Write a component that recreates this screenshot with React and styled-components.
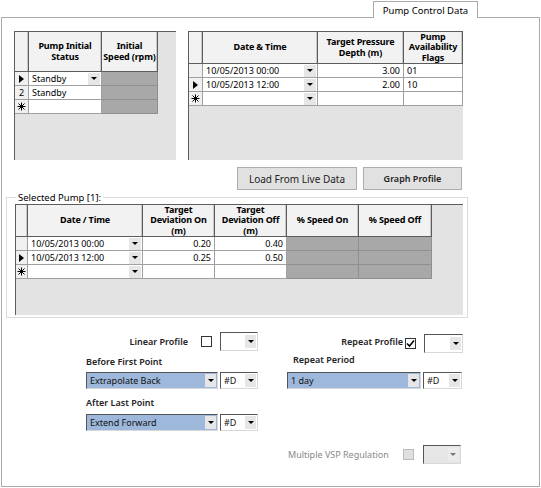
import styled, { createGlobalStyle } from "styled-components";

const GlobalStyle = createGlobalStyle`
  html, body { margin: 0; padding: 0; background: #fff; }
  body {
    font-family: "Noto Sans", "DejaVu Sans", sans-serif;
    font-size: 9px;
    color: #000;
  }
`;

const Window = styled.div`
  width: 541px;
  height: 488px;
  box-sizing: border-box;
  padding: 1px 0 0 1px;
  background: #fff;
`;

const Frame = styled.div`
  width: 539px;
  display: flex;
  flex-direction: column;
`;

const TabStrip = styled.div`
  height: 16px;
  border-bottom: 1px solid #acacac;
  display: flex;
  padding-left: 372px;
`;

const Tab = styled.div`
  width: 105px;
  height: 17px;
  box-sizing: border-box;
  margin-bottom: -1px;
  background: #fff;
  border: 1px solid #acacac;
  border-bottom: none;
  display: flex;
  align-items: center;
  justify-content: center;
  font-size: 9.5px;
  z-index: 1;
`;

const Panel = styled.div`
  height: 469px;
  box-sizing: border-box;
  border: 1px solid #acacac;
  border-top: none;
  display: flex;
  flex-direction: column;
`;

const TopRow = styled.div`
  display: flex;
  gap: 12px;
  margin: 13px 0 0 12px;
`;

const ButtonRow = styled.div`
  display: flex;
  gap: 6px;
  margin: 7px 0 0 235px;
`;

const Button = styled.div`
  width: ${(p) => p.$w}px;
  height: 23px;
  box-sizing: border-box;
  background: #e1e1e1;
  border: 1px solid #adadad;
  display: flex;
  align-items: center;
  justify-content: center;
  font-size: ${(p) => (p.$bold ? 9 : 10)}px;
  font-weight: ${(p) => (p.$bold ? 600 : 400)};
  color: #222;
`;

const GroupBox = styled.fieldset`
  margin: 1px 0 0 4px;
  width: 462px;
  box-sizing: border-box;
  border: 1px solid #dcdcdc;
  padding: 0 0 2px 8px;
`;

const Legend = styled.legend`
  padding: 0 2px;
  margin-left: 1px;
  font-size: 9.5px;
  line-height: 13px;
`;

/* ---- data grid ---- */

const GridFrame = styled.div`
  width: ${(p) => p.$w}px;
  height: ${(p) => p.$h}px;
  box-sizing: border-box;
  background: #e3e3e3;
  border-left: 1px solid #5d5d5d;
  border-top: 1px solid #5d5d5d;
  overflow: hidden;
`;

const GridTable = styled.div`
  display: grid;
  grid-template-columns: ${(p) => p.$cols};
  grid-template-rows: ${(p) => p.$head}px;
  grid-auto-rows: 14px;
  width: max-content;
`;

const HeadCell = styled.div`
  background: #f2f2f2;
  border-right: 1px solid #5d5d5d;
  border-bottom: 1px solid #5d5d5d;
  box-shadow: inset -1px 0 0 #c8c8c8;
  box-sizing: border-box;
  display: flex;
  align-items: center;
  justify-content: center;
  text-align: center;
  font-weight: 700;
  letter-spacing: -0.15px;
  line-height: 10.5px;
  padding: 0 1px;
`;

const Cell = styled.div`
  background: ${(p) => (p.$off ? "#a8a8a8" : "#fff")};
  border-right: 1px solid ${(p) => (p.$off ? "#8f8f8f" : "#a0a0a0")};
  border-bottom: 1px solid ${(p) => (p.$off ? "#8f8f8f" : "#a0a0a0")};
  box-sizing: border-box;
  display: flex;
  align-items: center;
  justify-content: ${(p) => (p.$right ? "flex-end" : "flex-start")};
  padding: 0 ${(p) => (p.$drop ? 1 : 3)}px 0 3px;
  white-space: nowrap;
  overflow: hidden;
`;

const RowHead = styled.div`
  background: #f0f0f0;
  border-right: 1px solid #a0a0a0;
  border-bottom: 1px solid #a0a0a0;
  box-sizing: border-box;
  display: flex;
  align-items: center;
  justify-content: center;
`;

const CellText = styled.span`
  flex: 1;
  text-align: ${(p) => (p.$right ? "right" : "left")};
`;

const Arrow = styled.span`
  width: 0;
  height: 0;
  border-left: 5px solid #000;
  border-top: 4px solid transparent;
  border-bottom: 4px solid transparent;
`;

const DropBtn = styled.span`
  width: ${(p) => p.$w || 12}px;
  height: ${(p) => p.$h || 12}px;
  flex: none;
  background: ${(p) => (p.$off ? "#ececec" : "#e6e6e6")};
  display: flex;
  align-items: center;
  justify-content: center;
  margin-left: auto;
  &::after {
    content: "";
    border-top: 3px solid ${(p) => (p.$off ? "#777" : "#000")};
    border-left: 3px solid transparent;
    border-right: 3px solid transparent;
  }
`;

const NewRow = () => (
  <svg width="9" height="9" viewBox="0 0 9 9">
    <g stroke="#000" strokeWidth="1">
      <line x1="4.5" y1="0.5" x2="4.5" y2="8.5" />
      <line x1="0.5" y1="4.5" x2="8.5" y2="4.5" />
      <line x1="1.5" y1="1.5" x2="7.5" y2="7.5" />
      <line x1="7.5" y1="1.5" x2="1.5" y2="7.5" />
    </g>
  </svg>
);

function marker(m) {
  if (m === "cur") return <Arrow />;
  if (m === "new") return <NewRow />;
  return m;
}

function DataGrid({ w, h, head, cols, headers, rows }) {
  return (
    <GridFrame $w={w} $h={h}>
      <GridTable $cols={cols.map((c) => c + "px").join(" ")} $head={head}>
        <HeadCell />
        {headers.map((t, i) => (
          <HeadCell key={i}>{t}</HeadCell>
        ))}
        {rows.map((r, ri) => [
          <RowHead key={"h" + ri}>{marker(r.mark)}</RowHead>,
          ...r.cells.map((c, ci) => (
            <Cell key={ri + "-" + ci} $off={c.off} $right={c.right} $drop={c.drop}>
              <CellText $right={c.right}>{c.t}</CellText>
              {c.drop && <DropBtn />}
            </Cell>
          )),
        ])}
      </GridTable>
    </GridFrame>
  );
}

/* ---- option controls ---- */

const Options = styled.div`
  display: flex;
  margin: 14px 0 0 84px;
  gap: 29px;
`;

const Column = styled.div`
  width: ${(p) => p.$w}px;
  display: flex;
  flex-direction: column;
`;

const Line = styled.div`
  display: flex;
  align-items: center;
  justify-content: ${(p) => (p.$end ? "flex-end" : "flex-start")};
  height: ${(p) => p.$h || 17}px;
  margin-top: ${(p) => p.$mt || 0}px;
  gap: ${(p) => p.$gap || 0}px;
`;

const Label = styled.span`
  color: ${(p) => (p.$off ? "#8a8a8a" : "#222")};
  font-weight: ${(p) => (p.$off ? 400 : 600)};
  margin-left: ${(p) => p.$ml || 0}px;
  margin-right: ${(p) => p.$mr || 0}px;
`;

const Check = styled.span`
  width: 11px;
  height: 11px;
  box-sizing: border-box;
  flex: none;
  border: 1px solid ${(p) => (p.$off ? "#bcbcbc" : "#333")};
  background: ${(p) => (p.$off ? "#e0e0e0" : "#fff")};
  margin-right: ${(p) => p.$mr || 0}px;
  margin-top: ${(p) => p.$mt || 0}px;
  display: flex;
  align-items: center;
  justify-content: center;
`;

const Combo = styled.div`
  width: ${(p) => p.$w}px;
  height: ${(p) => p.$h || 17}px;
  box-sizing: border-box;
  flex: none;
  display: flex;
  align-items: center;
  padding: 0 1px 0 3px;
  background: ${(p) => (p.$blue ? "#9db8db" : p.$off ? "#e6e6e6" : "#fff")};
  border-top: 1px solid #555;
  border-left: 1px solid #555;
  border-right: 1px solid #d8d8d8;
  border-bottom: 1px solid #d8d8d8;
  color: #111;
  white-space: nowrap;
  margin-top: ${(p) => p.$mt || 0}px;
`;

function Select({ w, h, blue, off, text, mt }) {
  return (
    <Combo $w={w} $h={h} $blue={blue} $off={off} $mt={mt}>
      <CellText>{text}</CellText>
      <DropBtn $w={11} $h={13} $off={off} />
    </Combo>
  );
}

const Tick = () => (
  <svg width="9" height="9" viewBox="0 0 9 9">
    <path d="M1 4.5 L3.5 7 L8 1.5" stroke="#000" strokeWidth="1.6" fill="none" />
  </svg>
);

const VspRow = styled.div`
  display: flex;
  align-items: center;
  height: 19px;
  margin: 14px 0 0 286px;
`;

export default function App() {
  return (
    <Window>
      <GlobalStyle />
      <Frame>
        <TabStrip>
          <Tab>Pump Control Data</Tab>
        </TabStrip>
        <Panel>
          <TopRow>
            <DataGrid
              w={162}
              h={129}
              head={40}
              cols={[14, 73, 56]}
              headers={["Pump Initial Status", "Initial Speed (rpm)"]}
              rows={[
                { mark: "cur", cells: [{ t: "Standby", drop: true }, { off: true }] },
                { mark: "2", cells: [{ t: "Standby" }, { off: true }] },
                { mark: "new", cells: [{}, { off: true }] },
              ]}
            />
            <DataGrid
              w={275}
              h={129}
              head={32}
              cols={[14, 115, 86, 59]}
              headers={["Date & Time", "Target Pressure Depth (m)", "Pump Availability Flags"]}
              rows={[
                { mark: "", cells: [{ t: "10/05/2013 00:00", drop: true }, { t: "3.00", right: true }, { t: "01" }] },
                { mark: "cur", cells: [{ t: "10/05/2013 12:00", drop: true }, { t: "2.00", right: true }, { t: "10" }] },
                { mark: "new", cells: [{ drop: true }, {}, {}] },
              ]}
            />
          </TopRow>

          <ButtonRow>
            <Button $w={120}>Load From Live Data</Button>
            <Button $w={99} $bold>
              Graph Profile
            </Button>
          </ButtonRow>

          <GroupBox>
            <Legend>Selected Pump [1]:</Legend>
            <DataGrid
              w={448}
              h={111}
              head={32}
              cols={[12, 115, 72, 72, 72, 73]}
              headers={[
                "Date / Time",
                "Target Deviation On (m)",
                "Target Deviation Off (m)",
                "% Speed On",
                "% Speed Off",
              ]}
              rows={[
                {
                  mark: "",
                  cells: [
                    { t: "10/05/2013 00:00", drop: true },
                    { t: "0.20", right: true },
                    { t: "0.40", right: true },
                    { off: true },
                    { off: true },
                  ],
                },
                {
                  mark: "cur",
                  cells: [
                    { t: "10/05/2013 12:00", drop: true },
                    { t: "0.25", right: true },
                    { t: "0.50", right: true },
                    { off: true },
                    { off: true },
                  ],
                },
                { mark: "new", cells: [{ drop: true }, {}, {}, { off: true }, { off: true }] },
              ]}
            />
          </GroupBox>

          <Options>
            <Column $w={172}>
              <Line $end $h={19}>
                <Label $mr={13}>Linear Profile</Label>
                <Check $mr={8} />
                <Select w={38} h={19} />
              </Line>
              <Line $h={16} $mt={2}>
                <Label>Before First Point</Label>
              </Line>
              <Line $mt={3} $gap={2}>
                <Select w={132} blue text="Extrapolate Back" />
                <Select w={38} text="#D" />
              </Line>
              <Line $h={16} $mt={5}>
                <Label>After Last Point</Label>
              </Line>
              <Line $mt={4} $gap={2}>
                <Select w={132} blue text="Extend Forward" />
                <Select w={38} text="#D" />
              </Line>
            </Column>
            <Column $w={176}>
              <Line $end $h={19}>
                <Label $mr={2}>Repeat Profile</Label>
                <Check $mr={8} $mt={3}>
                  <Tick />
                </Check>
                <Select w={39} h={19} mt={3} />
              </Line>
              <Line $h={16}>
                <Label $ml={6}>Repeat Period</Label>
              </Line>
              <Line $mt={5} $gap={2}>
                <Select w={134} blue text="1 day" />
                <Select w={39} text="#D" />
              </Line>
            </Column>
          </Options>

          <VspRow>
            <Label $off $mr={14}>
              Multiple VSP Regulation
            </Label>
            <Check $off $mr={9} />
            <Select w={38} h={19} off />
          </VspRow>
        </Panel>
      </Frame>
    </Window>
  );
}
